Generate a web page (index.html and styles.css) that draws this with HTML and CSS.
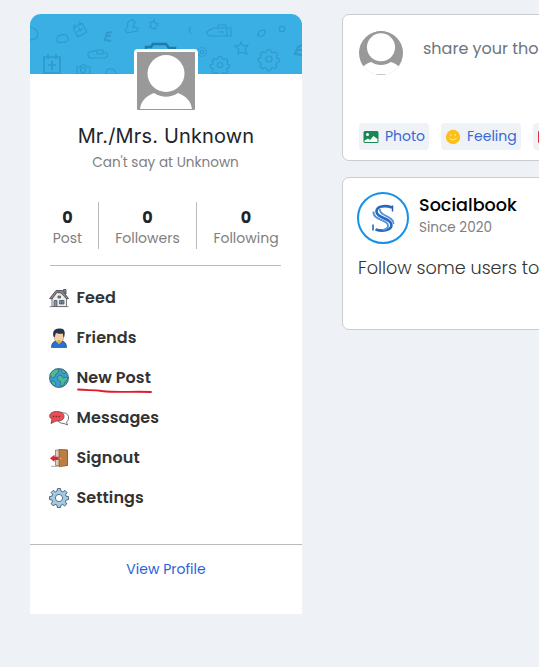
FILE: index.html
```html
<!DOCTYPE html>
<html lang="en">
<head>
<meta charset="utf-8">
<title>Socialbook</title>
<link rel="stylesheet" href="styles.css">
</head>
<body>
<main class="page">
  <aside class="sidebar">
    <div class="banner">
      <svg class="pattern" viewBox="0 0 272 60" fill="none" stroke="#2386b4" stroke-opacity=".5" stroke-width="1.1">
        <path d="M0 13c5 1 8 4 8 8-1 3-4 5-8 5"/>
        <path d="M28 29l-1-3c-2-5 10-8 11-2 1 4-5 5-8 4z"/>
        <g transform="rotate(-28 50 16)"><path d="M45 11h10v10H45zM47 8v4M53 8v4M50 13v5M47 16h6"/></g>
        <path d="M82 18l-5 1-2 7 6 1M76 22h5" stroke-width="2"/>
        <path d="M95 16l3-4c-3-4 5-9 7-4l-2 5 5 1-1 3-10 2z"/>
        <path d="M124 6l1 3 3 1-2 3-1 2-3-1-2-1 1-3-1-2 3 0z"/>
        <path d="M58 40c0-3 5-2 9-4h6v3h4l1 3-3 2H61c-2 0-3-2-3-4zM67 36v4h6"/>
        <path d="M14 43h16v16H14zM18 40v5M26 40v5M22 47v9M18 51h8" stroke-width="1.7"/>
        <path d="M47 53h3l2-2h3l2 2h3v7H47zM76 60c-1-7 9-7 10 0"/><circle cx="53" cy="56" r="2.5"/>
        <path d="M116 35v-2h5l2-3h13l3 4h6v3" stroke="#176b91" stroke-width="2.600" stroke-opacity=".75"/>
        <path d="M161 13l-2 3 2 4M178 17l5-3h18v8h-20c-4 0-5-4-3-5zM188 14v-3h8v3M197 14v8M188 18h6"/>
        <path d="M228 22c-1-3 1-6 7-6 1 4-3 8-7 6l1-3"/><circle cx="252" cy="15" r="2.700"/>
        <path d="M211 28l2 4 5-1-3 4 2 5-5-2-4 2 1-5-4-3 5-1z"/>
        <circle cx="172" cy="38" r="4.500" stroke-dasharray="2 1"/><circle cx="172" cy="38" r="1.800"/>
        <g transform="translate(190 51)"><circle r="2.700"/><path d="M-1.500-8.500h3l.6 2.300 2 .8 2-1.200 2 2.200-1.200 2 .6 1.700 2 .6v2.600l-2.200.7-.8 1.800 1 1.800-2 2-2-1-1.700.8-.6 2h-2.600l-.7-2.200-1.800-.7-2 1.100-2-2 1.100-2-.7-1.700-2.200-.6v-2.800l2.200-.6.7-1.700-1.100-2 2-2 2 1.100 1.700-.8z"/></g>
        <g transform="translate(239 45)"><circle r="3"/><path d="M-1.500-9.500h3l.7 2.600 2.200.9 2.200-1.300 2.200 2.400-1.300 2.200.6 1.900 2.200.7v2.800l-2.400.8-.9 2 1.100 2-2.200 2.200-2.200-1.100-1.900.9-.7 2.200h-2.800l-.8-2.400-2-.8-2.200 1.200-2.200-2.200 1.200-2.200-.8-1.900-2.400-.7V-.3l2.400-.7.8-1.900-1.200-2.200 2.200-2.200 2.200 1.200 1.900-.9z"/></g>
        <path d="M272 31l-4 2-3 7 7 1M267 36h5" stroke-width="2"/>
      </svg>
      <svg class="portrait" viewBox="0 0 58 58"><path fill="#999" d="M0 0h58v58H0z"/><path fill="#fff" d="M3 57c1-8 6-13 14-16 8 5 16 5 24 0 8 3 13 8 14 16z"/><circle cx="29" cy="21.500" r="21.500" fill="#999"/><circle cx="29" cy="21.500" r="18.500" fill="#fff"/></svg>
    </div>
    <h1 class="name">Mr./Mrs. Unknown</h1>
    <p class="bio">Can't say at Unknown</p>
    <div class="stats">
      <div class="stat"><b>0</b><span>Post</span></div>
      <div class="stat"><b>0</b><span>Followers</span></div>
      <div class="stat"><b>0</b><span>Following</span></div>
    </div>
    <nav class="menu">
      <a class="item"><svg class="icon" viewBox="0 0 20 20"><path fill="#f0ede8" stroke="#5a5b62" stroke-width=".8" d="M3 9v9.500h14.500V9l-5-6h-4z"/><path fill="#85858b" stroke="#44464e" stroke-width=".8" d="M.6 10.500L7 2.500h6.500l6 8-1.800.5L12 5 8 4.500 3 11zM14.500 1.500h2.500v4.500l-2.500-3z"/><path fill="#7d93a3" stroke="#464a55" stroke-width=".7" d="M5 12.500h3v6H5zM10.500 12.500h4.500v3.500h-4.500zM12.700 12.500v3.500M9 8h2.500v2H9z"/><path stroke="#6b6d75" stroke-width=".8" d="M.5 18.600h19"/></svg><span>Feed</span></a>
      <a class="item"><svg class="icon" viewBox="0 0 20 20"><path fill="#2d6fd0" stroke="#184785" stroke-width=".7" d="M2.500 19.600c0-4 1.500-6 5-6.800h5c3.500.8 5 2.800 5 6.800z"/><path fill="#f5cfa6" stroke="#8b6044" stroke-width=".4" d="M5.500 5h9v5c0 3-2 4-4.500 5.500C7.500 14 5.500 13 5.500 10z"/><path fill="#27344c" d="M4.500 8.500C3 3 6 .2 10.500.5c5-.3 6 3 4.800 8l-.8 1-.7-4C11 6.300 9 5.500 7 4.700L5.500 9.500z"/><path fill="#d7b348" d="M8.500 12h3v2.500l-1.500 2-1.500-2z"/></svg><span>Friends</span></a>
      <a class="item"><svg class="icon" viewBox="0 0 20 20"><circle cx="10" cy="10" r="9.500" fill="#3c9bd5" stroke="#31556c" stroke-width=".8"/><path fill="#4bb896" stroke="#276c78" stroke-width=".7" d="M1 8c0-3 3-6 6-7l3 1-1 3-2 1-1 3-2 1zM2 13l3 0 2 3-1 2c-2-1-4-3-4-5zM13 1l4 3-2 2-3-3zM8 9l3-2 2 1 1 2 4-1 1 2-3 3-2 4-3 0 1-4-3-2z"/></svg><span>New Post</span>
        <svg class="scribble" viewBox="0 0 76 6"><path d="M1 1.500c10 1 15 0 24 1.500 17 2 31 0 49 1" fill="none" stroke="#e11b2c" stroke-width="1.800" stroke-linecap="round"/></svg></a>
      <a class="item"><svg class="icon" viewBox="0 0 20 20"><path fill="#fff" stroke="#4b515c" stroke-width=".8" d="M12 5c5-1 8 2 7.500 5 0 2-1 3-2 4l1 3-3.500-1.500c-3 0-5-1-6-3z"/><path fill="#ed4e56" stroke="#79383d" stroke-width=".8" d="M7.500 3.500c5 0 7.500 2 7.500 5s-3 5-8 4.500L2 15.500l1-4C-1.500 8.500 1 3.500 7.500 3.500z"/><path stroke="#702f38" stroke-width="1.300" stroke-dasharray="1.500 1.300" d="M3.800 8.500h8"/></svg><span>Messages</span></a>
      <a class="item"><svg class="icon" viewBox="0 0 20 20"><path fill="#d9cec0" stroke="#956137" stroke-width=".7" d="M6.500 2h12v15.500h-12z"/><path fill="#bd7d42" stroke="#865025" stroke-width=".7" d="M10 1.500l8.500.5v15.500L10 18.800z"/><path fill="#d52836" d="M1 10.300l4.500-3.500v2h4v3.200h-4v2z"/><path fill="#e8bd52" d="M11 10h1.500v1H11z"/><path stroke="#a6a5a3" d="M2 18.300h7"/></svg><span>Signout</span></a>
      <a class="item"><svg class="icon" viewBox="0 0 20 20"><path fill="#a2cbe3" stroke="#3e586c" stroke-width=".9" stroke-linejoin="round" d="M8.500.6h3l.5 2.500 1.800.8L16 2.400 18 4.500l-1.400 2.100.6 1.700 2.300.4v2.800l-2.400.6-.7 1.700 1.400 2.100-2.100 2-2-1.400-1.800.8-.5 2.200h-3L8 17.200l-1.800-.8-2.100 1.400-2-2 1.400-2.200-.7-1.600-2.300-.5V8.700l2.400-.5.7-1.800L2.200 4.500l2-2.100 2.100 1.500L8 3z"/><circle cx="10" cy="10" r="3.600" fill="#fff" stroke="#47677f" stroke-width=".9"/></svg><span>Settings</span></a>
    </nav>
    <footer class="view"><a>View Profile</a></footer>
  </aside>
  <section class="feed">
    <article class="card composer">
      <div class="prompt">
        <svg class="round" viewBox="0 0 58 58"><path fill="#999" d="M0 0h58v58H0z"/><path fill="#fff" d="M0 57c2-8 8-14 16-16 8 5 18 5 26 0 8 2 14 8 16 16z"/><path fill="#fff" d="M5 47h48l7 10H-2z"/><circle cx="29" cy="21.500" r="21.500" fill="#999"/><circle cx="29" cy="21.500" r="18.500" fill="#fff"/></svg>
        <span class="share">share your thoughts</span>
      </div>
      <div class="actions">
        <a class="chip photo"><svg viewBox="0 0 16 16"><rect x=".5" y="2" width="15" height="12" rx="1.500" fill="#198754"/><circle cx="4.500" cy="5.500" r="1.500" fill="#fff"/><path fill="#fff" d="M1.500 11.500l3.500-2 2 1.500 3.500-4 4 3V13h-13z"/></svg><span>Photo</span></a>
        <a class="chip feeling"><svg viewBox="0 0 16 16"><circle cx="8" cy="8" r="7.200" fill="#fdc018"/><path stroke="#fff2c3" stroke-width="1" fill="none" stroke-linecap="round" d="M5.800 5.500v1M10.200 5.500v1M5 9.500c1.300 1.800 4.700 1.800 6 0"/></svg><span>Feeling</span></a>
        <a class="chip video"><svg viewBox="0 0 16 16"><rect x="1" y="2" width="15" height="12" rx="1" fill="#dc3545"/></svg></a>
      </div>
    </article>
    <article class="card post">
      <header class="author">
        <div class="logo"><svg viewBox="0 0 48 48" fill="none"><path stroke="#2868bd" stroke-width="2.600" d="M33 13.500C26 11 17.500 12 17.500 17.500c0 7 15 6.500 15 13.500 0 5-8 7-16 4.500"/><path stroke="#4f91df" stroke-width="1.800" d="M14.500 17.500c-1 9 14.500 8 14.500 14 0 2-2 4-5 4.500M21 15c-2 7 14.500 7 13.500 15"/><path stroke="#285bab" stroke-width="1.500" d="M33.500 11.500v6M14 30.500v6"/></svg></div>
        <div class="meta"><strong>Socialbook</strong><small>Since 2020</small></div>
      </header>
      <p class="text">Follow some users to see posts</p>
    </article>
  </section>
</main>
</body>
</html>
```
FILE: styles.css
```css
* { box-sizing: border-box; }
body { margin: 0; height: 667px; overflow: hidden; background: #eef2f7; font-family: Poppins, Inter, sans-serif; color: #212529; }
h1, p { margin: 0; }
svg { display: block; flex: none; }
.page { display: flex; align-items: flex-start; gap: 40px; padding: 14px 0 0 30px; overflow: hidden; }
.sidebar { flex: none; width: 272px; height: 600px; background: #fff; border-radius: 11px 11px 0 0; }
.banner { position: relative; height: 60px; background: #3aafe3; border-radius: 11px 11px 0 0; }
.pattern { width: 272px; height: 60px; }
.portrait { position: absolute; left: 104px; top: 35px; width: 64px; height: 64px; border: 3px solid #fff; border-radius: 4px; }
.name { margin-top: 47px; text-align: center; font: 400 20px/30px Inter, sans-serif; letter-spacing: .16px; white-space: nowrap; }
.bio { height: 22px; padding-right: 1px; text-align: center; font-size: 13.600px; line-height: 24px; color: #808080; }
.stats { display: grid; grid-template-columns: 62px 98px 98px; margin: 29px 0 0 7px; height: 47px; text-align: center; }
.stat { display: flex; flex-direction: column; padding-top: 5px; border-right: 1px solid #bbb; white-space: nowrap; }
.stat:last-child { border: 0; }
.stat b { font-size: 16px; line-height: 21px; font-weight: 700; }
.stat span { font-size: 14px; line-height: 21px; color: #808080; }
.menu { margin: 16px 21px 0 20px; padding-top: 11px; border-top: 1px solid #bbb; }
.item { position: relative; display: flex; align-items: center; gap: 7.500px; height: 40px; margin-left: -1px; font-size: 16px; font-weight: 600; letter-spacing: .08px; color: #333; white-space: nowrap; }
.icon { width: 20px; height: 20px; margin-top: 1px; }
.scribble { position: absolute; left: 28px; top: 31px; width: 76px; height: 6px; }
.view { margin-top: 27px; padding-top: 14px; border-top: 1px solid #bbb; text-align: center; font-size: 14px; line-height: 21px; color: #2b62dc; }
.feed { flex: none; width: 600px; display: grid; gap: 16px; }
.card { background: #fff; border: 1px solid #ccc; border-radius: 7px; }
.composer { height: 147px; padding: 16px; }
.prompt { display: flex; align-items: center; gap: 20px; height: 44px; }
.round { width: 44px; height: 44px; border-radius: 50%; }
.share { margin-top: -9px; font-size: 16px; line-height: 24px; color: #6c757d; white-space: nowrap; }
.actions { display: flex; gap: 12px; margin-top: 48px; }
.chip { display: flex; align-items: center; gap: 6px; height: 27px; padding-left: 4px; border-radius: 4px; background: #eff2f6; font-size: 14px; color: #3769d8; white-space: nowrap; }
.chip svg { width: 16px; height: 16px; }
.photo { width: 70px; }
.feeling { width: 80px; }
.video { width: 80px; }
.post { height: 153px; padding: 14px; }
.author { display: flex; gap: 10px; height: 52px; }
.logo { width: 52px; height: 52px; border: 2px solid #1690e9; border-radius: 50%; }
.logo svg { width: 48px; height: 48px; }
.meta { display: flex; flex-direction: column; align-items: flex-start; }
.meta strong { font-size: 17.600px; line-height: 26px; font-weight: 500; color: #000; }
.meta small { font-size: 13.600px; line-height: 19px; color: #808080; }
.text { margin: 11px 0 0 1px; font-size: 17.600px; line-height: 26px; font-weight: 300; color: #333; white-space: nowrap; }
```
